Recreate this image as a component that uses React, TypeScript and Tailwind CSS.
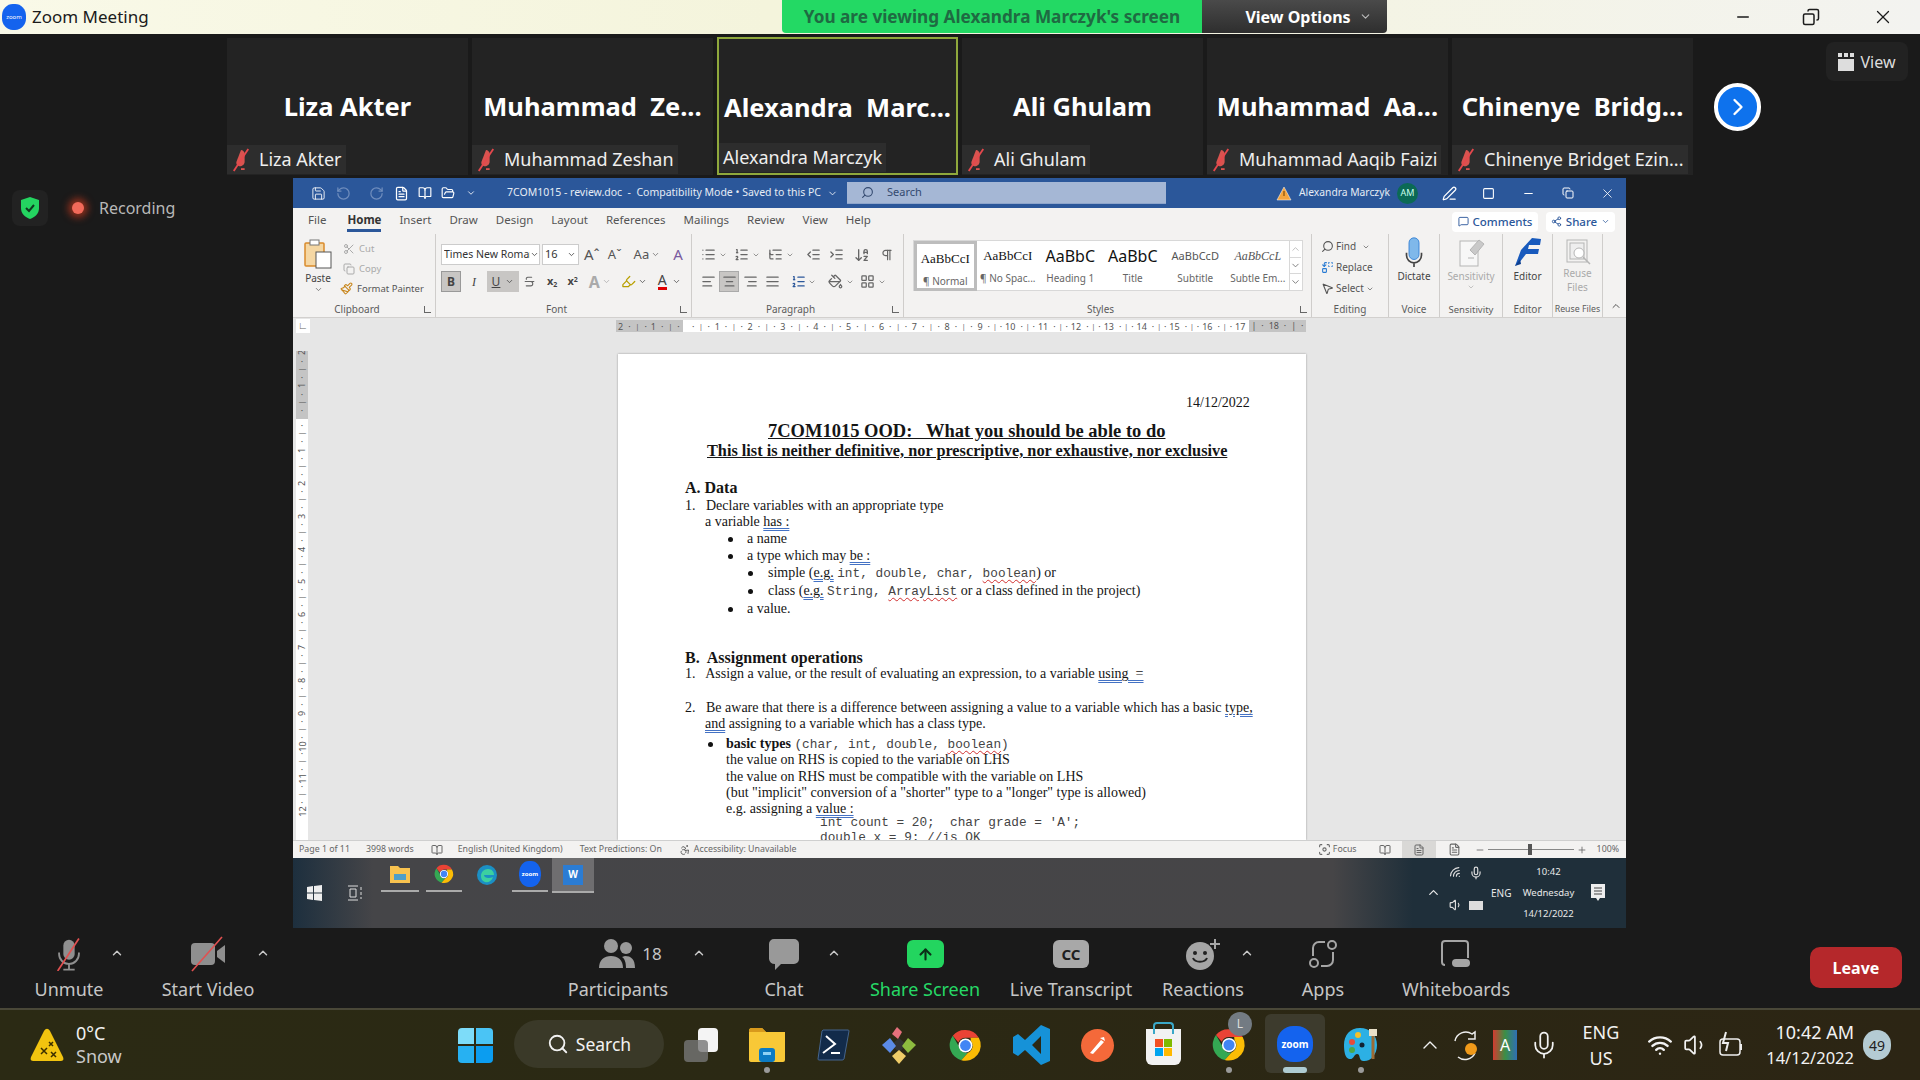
import { ReactNode } from "react";
import clsx from "clsx";
import {
  Accessibility,
  AlignCenter,
  AlignJustify,
  AlignLeft,
  AlignRight,
  ArrowDownAZ,
  ArrowUp,
  BookOpen,
  ChevronDown,
  ChevronRight,
  ChevronUp,
  Copy,
  FileText,
  Focus,
  FolderOpen,
  Highlighter,
  IndentDecrease,
  IndentIncrease,
  LayoutGrid,
  List,
  ListOrdered,
  ListTree,
  Mic,
  Minus,
  MessageSquare,
  Paintbrush,
  PaintBucket,
  PenLine,
  Pilcrow,
  Plus,
  Replace,
  RotateCcw,
  RotateCw,
  Save,
  Scissors,
  Search,
  Share2,
  Square,
  Strikethrough,
  MousePointer2,
  Volume1,
  Wifi,
  X,
} from "lucide-react";

const MIC = "M12 2a4 4 0 0 0-4 4v6a4 4 0 0 0 8 0V6a4 4 0 0 0-4-4z";

function Chrome({ size = 36 }: { size?: number }) {
  return (
    <svg width={size} height={size} viewBox="0 0 48 48">
      <path d="M24 4a20 20 0 0 1 17.3 10H24a10 10 0 0 0-9.2 6L7.5 11.5A20 20 0 0 1 24 4z" fill="#ea4335" />
      <path d="M7.5 11.5l9 15.5a10 10 0 0 0 10.6 6.5L18.6 43A20 20 0 0 1 7.5 11.5z" fill="#34a853" />
      <path d="M41.3 14a20 20 0 0 1-22.7 29l8.6-9.5A10 10 0 0 0 31 18l-.5-4z" fill="#fbbc05" />
      <circle cx="24" cy="24" r="9" fill="#fff" />
      <circle cx="24" cy="24" r="7" fill="#4285f4" />
    </svg>
  );
}

function ZoomLogo({ w, h, text }: { w: number; h: number; text: number }) {
  return (
    <div
      className="flex items-center justify-center bg-[#1463ee] rounded-[45%] text-white font-bold"
      style={{ width: w, height: h, fontSize: text }}
    >
      zoom
    </div>
  );
}

function ThumbTile({ name, label, active, muted = true }: { name: string; label: string; active?: boolean; muted?: boolean }) {
  return (
    <div
      className={clsx(
        "w-[241px] h-[137px] flex flex-col justify-between bg-[#232323] flex-none",
        active && "border-2 border-[#8fa83c] -mt-px h-[138px]"
      )}
    >
      <div className="pt-[50px] h-[100px] text-center text-white text-[25.500px] leading-[36px] font-bold whitespace-pre">{name}</div>
      <div className="flex h-[29px] items-center self-start max-w-full bg-[#2d2d2d] px-1 text-[#efefef] text-[18px] mb-px">
        {muted && (
          <svg width="20" height="26" viewBox="0 0 22 26" className="mr-[8px] flex-none">
            <path d="M11 2c2 0 4 2 4 4v9c0 3-3 5-5 5s-5-2-4-5z" fill="#d9534f" />
            <path d="M11 23h4" stroke="#d9534f" strokeWidth="2" />
            <path d="M19 1 3 25" stroke="#e5484d" strokeWidth="2" />
          </svg>
        )}
        <span className="whitespace-nowrap">{label}</span>
      </div>
    </div>
  );
}

function GroupBox({ className, label, children, launcher = true, labelClass }: { className: string; label: string; children: ReactNode; launcher?: boolean; labelClass?: string }) {
  return (
    <div className={clsx("relative flex-none flex flex-col h-[83px] mt-[2px] border-r border-[#cfcdcb]", className)}>
      <div className="h-[68px] flex-none relative">{children}</div>
      <div className={clsx("text-center leading-[13px] text-[#5c5c5c] mt-[1px] whitespace-nowrap", labelClass ?? "text-[10px]", launcher && "pr-[14px]")}>{label}</div>
      {launcher && <div className="absolute right-[4px] bottom-[4px] w-[7px] h-[7px] border-l border-b border-[#666]" />}
    </div>
  );
}

function StyleCell({ sample, name, className, active }: { sample: string; name: string; className: string; active?: boolean }) {
  return (
    <div className={clsx("w-[62.5px] flex-none flex flex-col items-center overflow-hidden h-[50px]", active && "border-[3px] border-[#bdbdbd]")}>
      <div className={clsx("h-[30px] leading-[30px] whitespace-nowrap", className)}>{sample}</div>
      <div className="text-[10px] leading-[14px] text-[#666] whitespace-nowrap">{name}</div>
    </div>
  );
}

function RulerCell({ n, left }: { n?: number; left?: boolean }) {
  return (
    <div className={clsx("w-[32.85px] flex-none flex items-center justify-between text-[9px] text-[#555] leading-none", left ? "px-[2px]" : "pl-[5px]")}>
      {left && <span>{n}</span>}
      <span>·</span>
      <span className="text-[7px]">|</span>
      <span>·</span>
      {!left && <span>{n}</span>}
    </div>
  );
}

function VRulerCell({ n, grey }: { n?: number; grey?: boolean }) {
  return (
    <div className={clsx("h-[32.85px] flex-none flex flex-col items-center justify-between text-[9px] text-[#555] leading-none py-[2px]", grey && "flex-col-reverse")}>
      <span>·</span>
      <span className="text-[7px] -rotate-90">|</span>
      <span>·</span>
      <span className="-rotate-90">{n}</span>
    </div>
  );
}

function Line({ className, children }: { className?: string; children: ReactNode }) {
  return <div className={clsx("h-4 leading-4 whitespace-pre text-[14px] text-[#151515]", className)}>{children}</div>;
}

function Mono({ children }: { children: ReactNode }) {
  return <span className="font-['Liberation_Mono',monospace] text-[12.75px] text-[#444]">{children}</span>;
}

function Blue({ children }: { children: ReactNode }) {
  return <span className="underline decoration-double decoration-[#4472c4] decoration-1 underline-offset-2">{children}</span>;
}

function Red({ children }: { children: ReactNode }) {
  return <span className="underline decoration-wavy decoration-[#d03030] decoration-1 underline-offset-2">{children}</span>;
}

function Dot() {
  return <span className="inline-block w-[5px] h-[5px] rounded-full bg-[#111] align-middle" />;
}

function ToolItem({ className, label, labelClass, children, caret }: { className: string; label: string; labelClass?: string; children: ReactNode; caret?: string }) {
  return (
    <div className={clsx("relative flex-none flex flex-col items-center pt-[11px]", className)}>
      <div className="h-[30px] flex items-center justify-center">{children}</div>
      <div className={clsx("text-[18px] leading-[24px] mt-[8px] whitespace-nowrap", labelClass ?? "text-[#c6c6c6]")}>{label}</div>
      {caret && <ChevronUp size={14} strokeWidth={2.5} className={clsx("absolute top-[18px] text-[#c8c8c8]", caret)} />}
    </div>
  );
}

function DockCell({ children, dot, active }: { children: ReactNode; dot?: boolean; active?: boolean }) {
  return (
    <div className="relative w-[66px] flex-none h-full flex items-center justify-center">
      {active && <div className="absolute left-[3px] right-[3px] top-[4px] bottom-[7px] rounded-md bg-[#3d3b2d]" />}
      <div className="relative">{children}</div>
      {dot && <div className="absolute bottom-[7px] left-[30px] w-[6px] h-[6px] rounded-full bg-[#9a9a9a]" />}
      {active && <div className="absolute bottom-[7px] left-[21px] w-[24px] h-[6px] rounded-full bg-[#aecbd2]" />}
    </div>
  );
}

export default function App() {
  return (
    <div className="w-[1920px] h-[1080px] overflow-hidden flex flex-col bg-[#1a1a1a] font-['Noto_Sans',sans-serif]">
      {/* zoom title bar */}
      <div className="h-[34px] flex-none flex items-center bg-[linear-gradient(90deg,#f9f9e8,#f4f4dc_40%,#f4f4e4_70%,#f3f3f0)]">
        <div className="ml-[2px] w-6 h-[26px] flex-none rounded-[45%] bg-[#1463ee] text-white text-[6px] flex items-center justify-center">zoom</div>
        <div className="ml-[6px] w-[750px] text-[17px] text-[#1b1b1b]">Zoom Meeting</div>
        <div className="h-[33px] w-[420px] self-start flex items-center justify-center bg-[#23d964] rounded-bl text-[17.200px] font-bold text-[#1f6a42] whitespace-nowrap">You are viewing Alexandra Marczyk's screen</div>
        <div className="h-[33px] w-[185px] self-start flex items-center justify-center gap-2 pl-[28px] bg-[linear-gradient(#4a4a4a,#2e2e2e)] rounded-br text-white text-[16px] font-bold">
          View Options <ChevronDown size={13} className="text-[#bbb]" />
        </div>
        <div className="ml-auto flex items-center text-[#1b1b1b]">
          <Minus size={18} className="mr-[50px]" />
          <Copy size={18} className="mr-[52px] -scale-x-100" />
          <X size={22} strokeWidth={1.4} className="mr-[26px]" />
        </div>
      </div>

      {/* thumbnail strip */}
      <div className="h-[144px] flex-none flex pl-[227px] pt-[4px] gap-[4px]">
        <ThumbTile name="Liza Akter" label="Liza Akter" />
        <ThumbTile name="Muhammad  Ze..." label="Muhammad Zeshan" />
        <ThumbTile name="Alexandra  Marc..." label="Alexandra Marczyk" active muted={false} />
        <ThumbTile name="Ali Ghulam" label="Ali Ghulam" />
        <ThumbTile name="Muhammad  Aa..." label="Muhammad Aaqib Faizi" />
        <ThumbTile name="Chinenye  Bridg..." label="Chinenye Bridget Ezin..." />
        <div className="ml-[17px] mt-[45px] w-[47px] h-[48px] flex-none rounded-full border-[4px] border-white bg-[#0e72ed] flex items-center justify-center">
          <ChevronRight size={28} className="text-white" />
        </div>
        <div className="ml-[61px] mt-[4px] w-[82px] h-[39px] flex-none rounded-lg bg-[#222] flex items-center justify-center gap-[6px] text-[#ddd] text-[16px]">
          <svg width="16" height="18" viewBox="0 0 16 18" fill="#ddd">
            <rect x="0" y="0" width="4" height="4" />
            <rect x="6" y="0" width="4" height="4" />
            <rect x="12" y="0" width="4" height="4" />
            <rect x="0" y="6" width="16" height="12" />
          </svg>
          View
        </div>
      </div>

      {/* middle */}
      <div className="h-[750px] flex-none flex">
        <div className="w-[293px] flex-none flex items-start pt-[12px] pl-[12px]">
          <div className="w-[36px] h-[36px] rounded-lg bg-[#222] flex items-center justify-center">
            <svg width="20" height="24" viewBox="0 0 20 24">
              <path d="M10 1l9 3v8c0 6-4 9-9 11-5-2-9-5-9-11V4z" fill="#24d460" />
              <path d="M6 12l3 3 5-6" fill="none" stroke="#0f3a1f" strokeWidth="2" />
            </svg>
          </div>
          <div className="ml-[24px] mt-[12px] w-3 h-3 rounded-full bg-[#f26a5a] shadow-[0_0_7px_4px_rgba(215,60,30,0.6)]" />
          <div className="ml-[15px] mt-[6px] text-[16px] text-[#b8b8b8]">Recording</div>
        </div>

        {/* word window */}
        <div className="w-[1333px] flex-none flex flex-col bg-[#e6e6e6] text-[#444]">
          <div className="h-[30px] flex-none flex items-center bg-[#2b579a] text-white">
            <Save size={15} className="ml-[18px]" strokeWidth={1.4} />
            <RotateCcw size={15} className="ml-[10px] text-[#6f8dbd]" />
            <RotateCw size={15} className="ml-[18px] text-[#6f8dbd]" />
            <FileText size={15} className="ml-[10px]" />
            <BookOpen size={14} className="ml-[9px]" />
            <FolderOpen size={14} className="ml-[9px]" />
            <ChevronDown size={10} className="ml-[11px]" />
            <div className="ml-[31px] w-[340px] flex items-center gap-[3px] text-[10.500px] text-[#e6ecf5] whitespace-pre">
              7COM1015 - review.doc  -  Compatibility Mode • Saved to this PC <ChevronDown size={11} />
            </div>
            <div className="w-[319px] h-[22px] flex items-center bg-[#a5b7d5] border-b border-[#8ea5cb] text-[#33496f] text-[11px]">
              <Search size={13} className="ml-[14px] mr-[13px] -scale-x-100" /> Search
            </div>
            <svg width="16" height="15" viewBox="0 0 16 15" className="ml-[110px]">
              <path d="M8 1l7 13H1z" fill="#f4a43d" stroke="#fff" strokeWidth=".5" />
              <path d="M8 5v5" stroke="#6a3d00" />
            </svg>
            <div className="ml-[7px] text-[10.300px] text-[#e6ecf5] whitespace-nowrap">Alexandra Marczyk</div>
            <div className="ml-[7px] w-[21px] h-[21px] rounded-full bg-[#0b6a55] text-[#cfe] text-[9px] flex items-center justify-center">AM</div>
            <PenLine size={15} className="ml-[24px]" />
            <Square size={13} className="ml-[25px]" />
            <Minus size={13} className="ml-[27px]" />
            <Copy size={12} className="ml-[27px]" />
            <X size={15} strokeWidth={1.3} className="ml-[26px]" />
          </div>

          {/* tabs */}
          <div className="h-[24px] flex-none flex items-center pl-[15px] gap-[18px] bg-[#f3f2f1] text-[11.500px] text-[#555] relative">
            <span>File</span>
            <span className="ml-[3px] font-bold text-[#333] border-b-[3px] border-[#2b579a] h-[24px] leading-[24px]">Home</span>
            <span>Insert</span>
            <span>Draw</span>
            <span>Design</span>
            <span>Layout</span>
            <span>References</span>
            <span>Mailings</span>
            <span>Review</span>
            <span>View</span>
            <span>Help</span>
            <div className="ml-auto w-[86px] h-[20px] mt-[3px] flex items-center justify-center gap-[4px] bg-white rounded-sm text-[#2b579a] text-[11.500px] font-medium">
              <MessageSquare size={11} /> Comments
            </div>
            <div className="w-[69px] h-[20px] mt-[3px] mr-[11px] -ml-[10px] flex items-center justify-center gap-[4px] bg-white rounded-sm text-[#2b579a] text-[11.500px] font-medium">
              <Share2 size={11} /> Share <ChevronDown size={9} />
            </div>
          </div>

          {/* ribbon */}
          <div className="h-[86px] flex-none flex bg-[#f3f2f1] border-b border-[#d2d0ce] text-[#666]">
            <GroupBox className="w-[143px]" label="Clipboard">
              <div className="flex h-full">
                <div className="w-[50px] flex flex-col items-center pt-[5px]">
                  <svg width="30" height="30" viewBox="0 0 30 30">
                    <rect x="2" y="4" width="19" height="23" rx="1" fill="#f5d7a3" stroke="#d98b2b" strokeWidth="1.5" />
                    <rect x="7" y="1" width="9" height="5" fill="#fff" stroke="#777" />
                    <rect x="13" y="13" width="15" height="16" fill="#fff" stroke="#555" />
                  </svg>
                  <div className="text-[10px] leading-[14px] text-[#444] mt-[2px]">Paste</div>
                  <ChevronDown size={9} />
                </div>
                <div className="flex flex-col justify-between text-[9.500px] pt-[8px] pb-[6px] h-[68px] whitespace-nowrap">
                  <div className="flex items-center gap-[4px] text-[#aaa]"><Scissors size={12} /> Cut</div>
                  <div className="flex items-center gap-[4px] text-[#aaa]"><Copy size={12} /> Copy</div>
                  <div className="flex items-center gap-[4px] -ml-[3px] text-[#555]"><Paintbrush size={13} className="text-[#c8861c]" /> Format Painter</div>
                </div>
              </div>
            </GroupBox>

            <GroupBox className="w-[256px]" label="Font">
              <div className="flex items-center h-[21px] pl-[5px] mt-[10px] gap-[2px]">
                <div className="w-[99px] h-[21px] bg-white border border-[#ccc] flex items-center pl-[2px] text-[10.500px] text-[#333] overflow-hidden whitespace-nowrap">
                  <span className="w-[86px] overflow-hidden flex-none">Times New Roman</span>
                  <ChevronDown size={9} className="flex-none" />
                </div>
                <div className="w-[37px] h-[21px] bg-white border border-[#ccc] flex items-center justify-between px-[2px] text-[11px] text-[#333]">16 <ChevronDown size={9} /></div>
                <span className="ml-[3px] text-[15px] text-[#555]">Aˆ</span>
                <span className="ml-[6px] text-[13px] text-[#555]">Aˇ</span>
                <span className="ml-[10px] text-[13px] text-[#555]">Aa</span>
                <ChevronDown size={9} />
                <span className="ml-[11px] text-[15px] text-[#7a5aa0]">A</span>
              </div>
              <div className="flex items-center h-[21px] pl-[5px] mt-[6px] text-[#444]">
                <div className="w-[20px] h-[21px] bg-[#c8c6c4] border border-[#999] flex items-center justify-center text-[12px] font-bold">B</div>
                <div className="w-[26px] text-center text-[12px] italic font-['Liberation_Serif',serif]">I</div>
                <div className="w-[32px] h-[21px] bg-[#c8c6c4] flex items-center justify-center gap-[5px] text-[12px] underline">U <ChevronDown size={9} /></div>
                <Strikethrough size={13} className="ml-[4px] text-[#666]" />
                <span className="ml-[11px] text-[11px] font-bold">x<sub className="text-[7px]">2</sub></span>
                <span className="ml-[10px] text-[11px] font-bold">x<sup className="text-[7px]">2</sup></span>
                <span className="ml-[11px] text-[16px] text-[#aaa] font-bold">A</span>
                <ChevronDown size={9} className="ml-[2px] text-[#aaa]" />
                <Highlighter size={15} className="ml-[10px] text-[#b8a000]" />
                <ChevronDown size={9} className="ml-[2px]" />
                <span className="ml-[11px] text-[14px] border-b-[3px] border-[#e00000] leading-[14px]">A</span>
                <ChevronDown size={9} className="ml-[5px]" />
              </div>
            </GroupBox>

            <GroupBox className="w-[212px]" label="Paragraph">
              <div className="flex items-center h-[21px] pl-[9px] mt-[10px] gap-[3px] text-[#666]">
                <List size={15} /><ChevronDown size={8} className="mr-[4px]" />
                <ListOrdered size={15} /><ChevronDown size={8} className="mr-[5px]" />
                <ListTree size={15} /><ChevronDown size={8} className="mr-[9px]" />
                <IndentDecrease size={15} className="mr-[5px]" />
                <IndentIncrease size={15} className="mr-[7px]" />
                <ArrowDownAZ size={16} className="mr-[7px]" />
                <Pilcrow size={14} />
              </div>
              <div className="flex items-center h-[21px] pl-[9px] mt-[6px] text-[#666]">
                <AlignLeft size={15} />
                <div className="ml-[3px] w-[20px] h-[21px] bg-[#c8c6c4] border border-[#aaa] flex items-center justify-center"><AlignCenter size={15} /></div>
                <AlignRight size={15} className="ml-[4px]" />
                <AlignJustify size={15} className="ml-[7px]" />
                <ListOrdered size={15} className="ml-[11px] text-[#2b579a]" />
                <ChevronDown size={8} className="ml-[2px]" />
                <PaintBucket size={15} className="ml-[12px]" />
                <ChevronDown size={8} className="ml-[3px]" />
                <LayoutGrid size={15} className="ml-[6px]" />
                <ChevronDown size={8} className="ml-[3px]" />
              </div>
            </GroupBox>

            <GroupBox className="w-[408px]" label="Styles">
              <div className="ml-[9px] mt-[6px] w-[390px] h-[51px] flex bg-white border border-[#d8d8d8]">
                <StyleCell sample="AaBbCcI" name="¶ Normal" className="text-[13px] text-[#111] font-['Liberation_Serif',serif]" active />
                <StyleCell sample="AaBbCcI" name="¶ No Spac..." className="text-[13px] text-[#111] font-['Liberation_Serif',serif]" />
                <StyleCell sample="AaBbC" name="Heading 1" className="text-[16px] text-[#111]" />
                <StyleCell sample="AaBbC" name="Title" className="text-[16px] text-[#111]" />
                <StyleCell sample="AaBbCcD" name="Subtitle" className="text-[11px] text-[#555]" />
                <StyleCell sample="AaBbCcL" name="Subtle Em..." className="text-[12px] italic text-[#555] font-['Liberation_Serif',serif]" />
                <div className="w-[13px] flex-none ml-auto flex flex-col border-l border-[#d8d8d8] text-[#777]">
                  <ChevronUp size={11} className="h-[16px] text-[#bbb]" />
                  <ChevronDown size={11} className="h-[17px] border-y border-[#d8d8d8]" />
                  <ChevronDown size={11} className="h-[16px]" />
                </div>
              </div>
            </GroupBox>

            <GroupBox className="w-[77px]" label="Editing" launcher={false}>
              <div className="flex flex-col pl-[9px] pt-[4px] gap-[4px] text-[10px] text-[#555]">
                <div className="flex items-center gap-[2px] h-[17px]"><Search size={13} className="-scale-x-100" /> Find <ChevronDown size={8} className="ml-[4px]" /></div>
                <div className="flex items-center gap-[2px] h-[17px]"><Replace size={13} className="text-[#2b7cd3]" /> Replace</div>
                <div className="flex items-center gap-[2px] h-[17px]"><MousePointer2 size={13} /> Select <ChevronDown size={8} /></div>
              </div>
            </GroupBox>

            <GroupBox className="w-[51px]" label="Voice" launcher={false}>
              <div className="flex flex-col items-center pt-[3px]">
                <svg width="20" height="30" viewBox="0 0 24 36">
                  <path d="M12 1a6 6 0 0 0-6 6v14a6 6 0 0 0 12 0V7a6 6 0 0 0-6-6z" fill="#7fb8ea" stroke="#2b7cd3" />
                  <path d="M3 19v3a9 9 0 0 0 18 0v-3M12 31v5" fill="none" stroke="#444" strokeWidth="2" />
                </svg>
                <div className="text-[10px] leading-[14px] mt-[2px] text-[#444]">Dictate</div>
              </div>
            </GroupBox>

            <GroupBox className="w-[63px]" label="Sensitivity" launcher={false} labelClass="text-[9.500px]">
              <div className="flex flex-col items-center pt-[3px] text-[#aaa]">
                <svg width="30" height="30" viewBox="0 0 30 30" fill="none" stroke="#b5b5b5">
                  <rect x="4" y="4" width="18" height="25" fill="#f7f7f7" />
                  <path d="M14 13 23 3l5 4-9 11z" fill="#c9c9c9" />
                  <path d="M12 21h6" />
                </svg>
                <div className="text-[10px] leading-[14px] mt-[2px]">Sensitivity</div>
                <ChevronDown size={8} />
              </div>
            </GroupBox>

            <GroupBox className="w-[50px]" label="Editor" launcher={false}>
              <div className="flex flex-col items-center pt-[3px]">
                <svg width="30" height="30" viewBox="0 0 30 30">
                  <path d="M2 29 8 13 19 1l9 1-1 6H16l-1 4h11l-1 5H13l-7 9z" fill="#185abd" />
                  <path d="M2 29l5-7 1 5z" fill="#0d3f8f" />
                </svg>
                <div className="text-[10px] leading-[14px] mt-[2px] text-[#444]">Editor</div>
              </div>
            </GroupBox>

            <GroupBox className="w-[50px]" label="Reuse Files" launcher={false} labelClass="text-[8.800px]">
              <div className="flex flex-col items-center pt-[4px] text-[#aaa]">
                <svg width="28" height="28" viewBox="0 0 28 28" fill="none" stroke="#b5b5b5">
                  <rect x="3" y="2" width="20" height="22" />
                  <rect x="6" y="5" width="14" height="16" fill="#eee" />
                  <circle cx="15" cy="15" r="5" fill="#fff" />
                  <path d="M19 19l7 7" strokeWidth="1.5" />
                </svg>
                <div className="text-[10px] leading-[14px] text-center">Reuse<br />Files</div>
              </div>
            </GroupBox>
            <ChevronUp size={12} className="ml-[7px] mt-[68px] text-[#555]" />
          </div>

          {/* horizontal ruler */}
          <div className="h-[14px] flex-none flex pt-[2px] relative">
            <div className="ml-[3px] -mt-px w-[14px] h-[14px] bg-white text-[10px] leading-[12px] text-center text-[#666] font-bold">∟</div>
            <div className="ml-[306px] w-[67px] h-[12px] flex-none flex bg-[#c4c4c4] overflow-hidden">
              <RulerCell n={2} left />
              <RulerCell n={1} left />
            </div>
            <div className="w-[566px] h-[12px] flex-none flex pl-[4px] bg-white overflow-hidden relative">
              {Array.from({ length: 17 }, (_, i) => (
                <RulerCell key={i} n={i + 1} />
              ))}
            </div>
            <div className="w-[57px] h-[12px] flex-none flex items-center justify-around bg-[#c4c4c4] text-[9px] text-[#555] overflow-hidden">
              <span>|</span><span>·</span><span>18</span><span>·</span><span>|</span><span>·</span>
            </div>
          </div>

          {/* document */}
          <div className="flex-1 min-h-0 flex overflow-hidden">
            <div className="ml-[3px] w-[12px] flex-none flex flex-col pt-[19px] overflow-hidden">
              <div className="h-[68px] flex-none flex flex-col bg-[#c4c4c4] overflow-hidden">
                <VRulerCell n={2} grey />
                <VRulerCell n={1} grey />
              </div>
              <div className="flex-1 flex flex-col bg-white overflow-hidden">
                {Array.from({ length: 12 }, (_, i) => (
                  <VRulerCell key={i} n={i + 1} />
                ))}
              </div>
            </div>
            <div className="ml-[310px] mt-[22px] w-[688px] flex-none bg-white shadow-[0_0_2px_rgba(0,0,0,0.35)] pt-[41px] pl-[67px] font-['Liberation_Serif',serif] overflow-hidden">
              <Line className="ml-[501px] w-[60px] text-[#777]">14/12/2022</Line>
              <Line className="mt-[12px] ml-[83px] text-[18.500px] font-bold underline">7COM1015 OOD:   What you should be able to do</Line>
              <Line className="mt-[4px] ml-[22px] text-[16.270px] font-bold underline">This list is neither definitive, nor prescriptive, nor exhaustive, nor exclusive</Line>
              <Line className="mt-[21px] text-[16px] font-bold">A. Data</Line>
              <Line className="mt-[2px]">1.   Declare variables with an appropriate type</Line>
              <Line className="ml-[20px]">a variable <Blue>has :</Blue></Line>
              <Line className="mt-px ml-[43px]"><Dot /><span className="ml-[14px]">a name</span></Line>
              <Line className="mt-px ml-[43px]"><Dot /><span className="ml-[14px]">a type which may </span><Blue>be :</Blue></Line>
              <Line className="mt-px ml-[63px]"><Dot /><span className="ml-[15px]">simple (</span><Blue>e.g.</Blue> <Mono>int, double, char, </Mono><Red><Mono>boolean</Mono></Red>) or</Line>
              <Line className="mt-[2px] ml-[63px]"><Dot /><span className="ml-[15px]">class (</span><Blue>e.g.</Blue> <Mono>String, </Mono><Red><Mono>ArrayList</Mono></Red> or a class defined in the project)</Line>
              <Line className="mt-[2px] ml-[43px]"><Dot /><span className="ml-[14px]">a value.</span></Line>
              <Line className="mt-[33px] text-[16px] font-bold">B.  Assignment operations</Line>
              <Line>1.   Assign a value, or the result of evaluating an expression, to a variable <Blue>using  =</Blue></Line>
              <Line className="mt-[18px]">2.   Be aware that there is a difference between assigning a value to a variable which has a basic <Blue>type,</Blue></Line>
              <Line className="ml-[20px]"><Blue>and</Blue> assigning to a variable which has a class type.</Line>
              <Line className="mt-[4px] ml-[23px]"><Dot /><span className="ml-[13px] font-bold">basic types</span> <Mono>(char, int, double, </Mono><Red><Mono>boolean</Mono></Red><Mono>)</Mono></Line>
              <Line className="ml-[41px]">the value on RHS is copied to the variable on LHS</Line>
              <Line className="mt-px ml-[41px]">the value on RHS must be compatible with the variable on LHS</Line>
              <Line className="ml-[41px]">(but "implicit" conversion of a "shorter" type to a "longer" type is allowed)</Line>
              <Line className="ml-[41px]">e.g. assigning a <Blue>value :</Blue></Line>
              <Line className="-mt-[3px] ml-[135px]"><Mono>int count = 20;  char grade = 'A';</Mono></Line>
              <Line className="-mt-px ml-[135px]"><Mono>double x = 9; //is OK</Mono></Line>
            </div>
          </div>

          {/* status bar */}
          <div className="h-[18px] flex-none flex items-center bg-[#f3f2f1] border-t border-[#cfcfcf] text-[8.800px] text-[#666] whitespace-nowrap">
            <span className="ml-[6px]">Page 1 of 11</span>
            <span className="ml-[16px]">3998 words</span>
            <BookOpen size={12} className="ml-[17px]" />
            <span className="ml-[15px]">English (United Kingdom)</span>
            <span className="ml-[17px]">Text Predictions: On</span>
            <Accessibility size={12} className="ml-[17px]" />
            <span className="ml-[3px]">Accessibility: Unavailable</span>
            <div className="ml-auto flex items-center h-full">
              <Focus size={13} />
              <span className="ml-[2px]">Focus</span>
              <BookOpen size={12} className="ml-[22px]" />
              <div className="ml-[11px] w-[34px] h-full bg-[#d9d8d6] flex items-center justify-center"><FileText size={12} /></div>
              <FileText size={13} className="ml-[12px]" />
              <Minus size={10} className="ml-[14px]" />
              <div className="ml-[3px] relative w-[86px] h-px bg-[#888]">
                <div className="absolute left-[40px] -top-[5px] w-[4px] h-[11px] bg-[#555]" />
              </div>
              <Plus size={10} className="ml-[3px]" />
              <span className="ml-[10px] mr-[7px]">100%</span>
            </div>
          </div>

          {/* shared screen taskbar */}
          <div className="h-[70px] flex-none flex items-start text-[#e8e8e8] bg-[linear-gradient(90deg,#1d2f3e,#454548_6%,#464547_78%,#1f2f3a_84%)]">
            <svg width="15" height="16" viewBox="0 0 15 16" className="ml-[14px] mt-[27px]">
              <path d="M0 2l6-1v6.500H0zM7 1l8-1v7.500H7zM0 8.500h6V15l-6-1zM7 8.500h8V16l-8-1z" fill="#eee" />
            </svg>
            <svg width="16" height="16" viewBox="0 0 16 16" fill="none" stroke="#ddd" className="ml-[25px] mt-[27px]">
              <path d="M1 1h10M1 15h10M3 4h6v8H3zM14 2v3M14 7v3M14 12v2" />
            </svg>
            <div className="ml-[18px] h-[34px] w-[38px] flex items-center justify-center border-b-2 border-[#aaa]">
              <svg width="22" height="22" viewBox="0 0 22 22"><path d="M1 3h8l2 2h10v15H1z" fill="#f8c24f" /><rect x="5" y="11" width="12" height="6" fill="#4f9ec9" /></svg>
            </div>
            <div className="ml-[7px] h-[34px] w-[36px] flex items-center justify-center border-b-2 border-[#aaa]"><Chrome size={22} /></div>
            <div className="ml-[7px] h-[34px] w-[36px] flex items-center justify-center">
              <svg width="22" height="22" viewBox="0 0 22 22"><circle cx="11" cy="11" r="10" fill="#1b8fc4" /><path d="M5 12c0-4 3-7 7-7s6 3 6 6H8c0 3 5 4 9 2-1 4-5 6-8 5-3-1-4-3-4-6z" fill="#3cd0a0" /></svg>
            </div>
            <div className="ml-[7px] h-[34px] w-[36px] flex items-center justify-center border-b-2 border-[#aaa]"><ZoomLogo w={22} h={26} text={6} /></div>
            <div className="ml-[4px] h-[35px] w-[42px] flex items-center justify-center bg-[#6f6e70] border-b-2 border-[#aaa]">
              <div className="w-[20px] h-[20px] bg-[#2b7cd3] flex items-center justify-center text-white text-[10px] font-bold">W</div>
            </div>
            <ChevronUp size={15} className="ml-[832px] mt-[27px]" />
            <div className="ml-[8px] mt-[8px] w-[36px] flex flex-wrap gap-y-[18px] gap-x-[6px] text-[#ddd]">
              <Wifi size={14} className="-rotate-45" />
              <Mic size={14} />
              <Volume1 size={14} />
              <div className="w-[14px] h-[9px] mt-[3px] border border-[#ddd] bg-[#ddd]" />
            </div>
            <div className="ml-[6px] mt-[28px] text-[10px]">ENG</div>
            <div className="ml-[7px] w-[60px] flex-none flex flex-col items-center text-[9.500px] leading-[21px] mt-[3px]">
              <span>10:42</span>
              <span>Wednesday</span>
              <span>14/12/2022</span>
            </div>
            <svg width="14" height="18" viewBox="0 0 14 18" className="ml-[13px] mt-[26px]">
              <path d="M0 0h14v14H9l-2 3-2-3H0z" fill="#eee" />
              <path d="M3 4h8M3 7h8M3 10h8" stroke="#444" />
            </svg>
          </div>
        </div>
      </div>

      {/* zoom toolbar */}
      <div className="h-[80px] flex-none flex">
        <ToolItem className="w-[138px]" label="Unmute" caret="left-[110px]">
          <svg width="34" height="34" viewBox="0 0 24 24">
            <path d={MIC} fill="#8f8f8f" />
            <path d="M5 11v1a7 7 0 0 0 14 0v-1M12 19v4M8 23h8" fill="none" stroke="#8f8f8f" strokeWidth="1.3" />
            <path d="M19 1 4 24" stroke="#e05050" strokeWidth="1.2" />
          </svg>
        </ToolItem>
        <ToolItem className="w-[140px]" label="Start Video" caret="left-[118px]">
          <svg width="38" height="36" viewBox="0 0 38 36">
            <rect x="2" y="7" width="24" height="22" rx="4" fill="#8f8f8f" />
            <path d="M28 15l8-6v18l-8-6z" fill="#8f8f8f" />
            <path d="M33 1 3 35" stroke="#e05050" strokeWidth="1.6" />
          </svg>
        </ToolItem>
        <div className="w-[265px] flex-none" />
        <ToolItem className="w-[150px]" label="Participants" caret="left-[149px]">
          <div className="ml-[24px] flex items-center">
            <svg width="38" height="32" viewBox="0 0 38 32">
              <circle cx="13" cy="8" r="7" fill="#999" />
              <path d="M1 30c0-8 5-12 12-12s12 4 12 12z" fill="#999" />
              <circle cx="28" cy="10" r="6" fill="#999" />
              <path d="M27 18c6 0 10 3 10 12h-9c0-5-1-9-4-11z" fill="#999" />
            </svg>
            <span className="ml-[6px] text-[17px] text-[#c6c6c6]">18</span>
          </div>
        </ToolItem>
        <ToolItem className="w-[182px]" label="Chat" caret="left-[134px]">
          <svg width="32" height="32" viewBox="0 0 32 32"><path d="M6 1h20a5 5 0 0 1 5 5v15a5 5 0 0 1-5 5H13l-6 6v-6a6 6 0 0 1-6-5V6a5 5 0 0 1 5-5z" fill="#999" /></svg>
        </ToolItem>
        <ToolItem className="w-[100px]" label="Share Screen" labelClass="text-[#26d866]">
          <div className="w-[37px] h-[28px] rounded-md bg-[#23d55f] flex items-center justify-center text-[#0b2f18]">
            <ArrowUp size={17} strokeWidth={3} />
          </div>
        </ToolItem>
        <ToolItem className="w-[192px]" label="Live Transcript">
          <div className="w-[36px] h-[28px] rounded-md bg-[#a8a8a8] flex items-center justify-center text-[#1e1e1e] text-[15px] font-bold">CC</div>
        </ToolItem>
        <ToolItem className="w-[72px]" label="Reactions" caret="left-[73px]">
          <svg width="36" height="32" viewBox="0 0 36 32">
            <circle cx="15" cy="18" r="14" fill="#a5a5a5" />
            <circle cx="10" cy="15" r="2" fill="#222" /><circle cx="20" cy="15" r="2" fill="#222" />
            <path d="M8 20c2 5 12 5 14 0" fill="none" stroke="#222" strokeWidth="2" />
            <path d="M30 1v10M25 6h10" stroke="#a5a5a5" strokeWidth="2" />
          </svg>
        </ToolItem>
        <ToolItem className="w-[168px]" label="Apps">
          <svg width="30" height="30" viewBox="0 0 30 30" fill="none" stroke="#a5a5a5" strokeWidth="2">
            <path d="M5 17V9a6 6 0 0 1 6-6h6M25 13v8a6 6 0 0 1-6 6h-6" />
            <circle cx="24" cy="6" r="4" />
            <circle cx="6" cy="24" r="4" />
          </svg>
        </ToolItem>
        <ToolItem className="w-[98px]" label="Whiteboards">
          <svg width="32" height="30" viewBox="0 0 32 30" fill="none">
            <path d="M5 26a3 3 0 0 1-3-3V5a3 3 0 0 1 3-3h20a3 3 0 0 1 3 3v14" stroke="#a5a5a5" strokeWidth="2" />
            <rect x="12" y="20" width="18" height="8" rx="4" fill="#a5a5a5" />
          </svg>
        </ToolItem>
        <div className="ml-auto mr-[18px] mt-[19px] w-[92px] h-[41px] rounded-[10px] bg-[#b5282b] flex items-center justify-center text-white font-bold text-[16px]">Leave</div>
      </div>

      {/* windows taskbar */}
      <div className="h-[72px] flex-none flex items-stretch border-t-2 border-[#4a4838] bg-[linear-gradient(90deg,#2b2a14,#2b2914_40%,#2c2514_100%)] text-[#f2f2f2]">
        <div className="w-[442px] flex-none flex items-center">
          <svg width="36" height="34" viewBox="0 0 36 34" className="ml-[29px]">
            <path d="M15 3c2-3 4-3 6 0l13 26c1 3 0 4-3 4H5c-3 0-4-1-3-4z" fill="#f2c40f" />
            <path d="M12 20l6 6M18 20l-6 6M20 14l4 4M24 14l-4 4M22 24l5 5M27 24l-5 5" stroke="#3a2f00" strokeWidth="1.5" />
          </svg>
          <div className="ml-[11px] flex flex-col text-[18px] leading-[23px]">
            <span>0°C</span>
            <span className="text-[#c8c8c8]">Snow</span>
          </div>
        </div>
        <div className="w-[66px] flex-none flex items-center justify-center">
          <div className="w-[35px] h-[35px] grid grid-cols-2 gap-[2px]">
            <div className="rounded-tl-sm bg-[#7ddcf9]" />
            <div className="rounded-tr-sm bg-[#4ac4f5]" />
            <div className="rounded-bl-sm bg-[#27b1f2]" />
            <div className="rounded-br-sm bg-[#0b9df0]" />
          </div>
        </div>
        <div className="ml-[6px] mt-[10px] w-[150px] h-[48px] flex-none rounded-full bg-[#3a3928] flex items-center justify-center gap-[7px] text-[17.500px]">
          <Search size={22} />
          Search
        </div>
        <div className="ml-[4px] flex h-full">
          <DockCell>
            <div className="relative w-[34px] h-[34px]">
              <div className="w-[20px] h-[24px] ml-[14px] rounded-sm bg-[#f4f4f4]" />
              <div className="absolute left-0 bottom-0 w-[24px] h-[22px] rounded-sm bg-[#777]/80" />
            </div>
          </DockCell>
          <DockCell dot>
            <svg width="36" height="34" viewBox="0 0 36 34">
              <path d="M0 3a3 3 0 0 1 3-3h10l4 4h19v28a2 2 0 0 1-2 2H2a2 2 0 0 1-2-2z" fill="#f8c837" />
              <path d="M0 3a3 3 0 0 1 3-3h10l4 4H0z" fill="#d89a1c" />
              <rect x="10" y="20" width="16" height="14" rx="3" fill="#0b7bc4" />
              <rect x="14" y="24" width="8" height="3" fill="#8ed2f5" />
            </svg>
          </DockCell>
          <DockCell>
            <svg width="34" height="34" viewBox="0 0 34 34">
              <path d="M7 2h25a1 1 0 0 1 1 1l-5 28a2 2 0 0 1-2 1H3a1 1 0 0 1-1-1l4-28z" fill="#122b4a" stroke="#45658d" />
              <path d="M10 8l9 8-12 9M15 25h9" fill="none" stroke="#fff" strokeWidth="2" />
            </svg>
          </DockCell>
          <DockCell>
            <svg width="36" height="38" viewBox="0 0 36 38">
              <path d="M18 12 26 19 18 26 10 19z" fill="#333" />
              <path d="M11 8l5-7 5 5-4 7z" fill="#e5707c" />
              <path d="M9 12 1 19l8 8 6-7z" fill="#5b8be8" />
              <path d="M27 12l8 7-8 8-6-7z" fill="#8dbb3f" />
              <path d="M18 24l7 6-7 8-7-8z" fill="#efcc68" />
            </svg>
          </DockCell>
          <DockCell><Chrome size={37} /></DockCell>
          <DockCell>
            <svg width="37" height="40" viewBox="0 0 37 40">
              <path d="M28 0 37 4v32l-9 4L12 25l-7 6-5-3V12l5-3 7 6zM28 11l-9 9 9 9z" fill="#1692d8" fillRule="evenodd" />
            </svg>
          </DockCell>
          <DockCell>
            <div className="w-[33px] h-[33px] rounded-full bg-[#f4693a] flex items-center justify-center">
              <svg width="20" height="20" viewBox="0 0 20 20"><path d="M3 18 14 5l3 2L6 19zM13 3l4-1 1 4z" fill="#fff" /></svg>
            </div>
          </DockCell>
          <DockCell>
            <div className="relative w-[35px] h-[36px] mt-[4px] rounded-b-md bg-[#f2f2f2] flex items-center justify-center">
              <div className="absolute -top-[7px] left-[7px] w-[21px] h-[12px] border-2 border-b-0 border-[#3ba8c8] rounded-t" />
              <div className="grid grid-cols-2 gap-[1px] w-[17px] h-[17px]">
                <div className="bg-[#f25022]" /><div className="bg-[#7fba00]" /><div className="bg-[#00a4ef]" /><div className="bg-[#ffb900]" />
              </div>
            </div>
          </DockCell>
          <DockCell dot>
            <div className="relative">
              <Chrome size={38} />
              <div className="absolute -top-[14px] left-[18px] w-[24px] h-[24px] rounded-full bg-[#737b83] text-[#ddd] text-[12px] flex items-center justify-center">L</div>
            </div>
          </DockCell>
          <DockCell active>
            <div className="-mt-[2px]"><ZoomLogo w={36} h={36} text={10} /></div>
          </DockCell>
          <DockCell dot>
            <svg width="36" height="36" viewBox="0 0 36 36">
              <path d="M17 1c10 0 17 7 17 17s-7 17-14 16c-5-1-2-7-6-7-3 0-3 6-8 5C2 31 1 24 1 18 1 8 7 1 17 1z" fill="#2cb0e4" />
              <circle cx="9" cy="15" r="3" fill="#e64b3c" /><circle cx="15" cy="8" r="3" fill="#f3c02b" /><circle cx="9" cy="23" r="3" fill="#4aa84a" /><circle cx="19" cy="18" r="2.500" fill="#123" />
              <path d="M30 6v26" stroke="#9c6b35" strokeWidth="3" />
              <path d="M26 2h8v7h-8z" fill="#e8e0c8" />
            </svg>
          </DockCell>
        </div>
        <ChevronUp size={24} strokeWidth={1.4} className="ml-[24px] self-center flex-none" />
        <svg width="32" height="32" viewBox="0 0 32 32" fill="none" className="ml-[7px] self-center flex-none">
          <path d="M6 12a11 11 0 0 1 17-7l3-2v7h-7M26 24a11 11 0 0 1-17 4" stroke="#eee" strokeWidth="1.5" />
          <circle cx="22" cy="20" r="6" fill="#f09a1a" />
        </svg>
        <div className="ml-[12px] self-center w-[24px] h-[30px] flex-none flex items-center justify-center bg-[linear-gradient(90deg,#d23b30,#3c8f45_50%,#2f6fb5)] text-white text-[16px]">A</div>
        <Mic size={30} strokeWidth={1.4} className="ml-[12px] self-center flex-none" />
        <div className="ml-[14px] w-[56px] flex-none self-center flex flex-col items-center text-[18px] leading-[26px]">
          <span>ENG</span>
          <span>US</span>
        </div>
        <Wifi size={26} strokeWidth={2.2} className="ml-[18px] self-center flex-none" />
        <Volume1 size={26} strokeWidth={1.6} className="ml-[10px] self-center flex-none" />
        <svg width="26" height="28" viewBox="0 0 26 28" fill="none" className="ml-[9px] self-center flex-none">
          <rect x="2" y="8" width="20" height="16" rx="3" stroke="#eee" strokeWidth="1.5" />
          <path d="M23 13v6" stroke="#eee" strokeWidth="2" />
          <path d="M8 1 5 12h5l-2 8" stroke="#eee" strokeWidth="2" />
        </svg>
        <div className="w-[110px] flex-none self-center flex flex-col items-end text-[18px] leading-[26px] whitespace-nowrap">
          <span>10:42 AM</span>
          <span className="text-[16.500px]">14/12/2022</span>
        </div>
        <div className="ml-[9px] w-[28px] h-[30px] flex-none self-center rounded-full bg-[#b4cbd3] text-[#222] text-[14px] flex items-center justify-center">49</div>
      </div>
    </div>
  );
}
